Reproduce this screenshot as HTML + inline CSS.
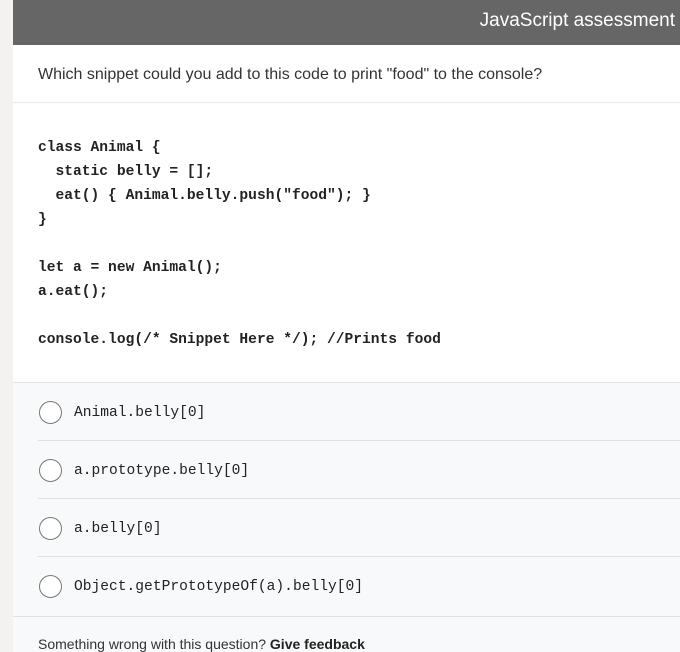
<!DOCTYPE html>
<html><head><style>
html,body{margin:0;width:680px;height:652px;overflow:hidden}
body{background:#f3f2f1;font-family:"Liberation Sans",sans-serif;position:relative}
.main{position:absolute;left:13px;top:0;width:667px;height:652px;background:#fff}
.hdr{height:45px;background:#666;color:#fff;font-size:19px;text-align:right;padding-right:5px;line-height:42px;box-sizing:border-box}
.q{height:57px;border-bottom:1px solid #eaeaea;font-size:16px;color:#333;padding-left:25px;line-height:60px;box-sizing:content-box}
.code{position:absolute;left:25px;top:136px;font-family:"Liberation Mono",monospace;font-weight:bold;font-size:14.6px;line-height:24px;color:#222;white-space:pre;margin:0}
.opts{position:absolute;top:382px;left:0;width:667px;height:233px;background:#f8f9fa;border-top:1px solid #e6e6e6}
.opt{position:absolute;left:25px;width:642px;height:57px;border-bottom:1px solid #e1e1e1}
.c{position:absolute;left:1px;top:18px;width:21px;height:21px;border:1.5px solid #777;border-radius:50%;background:#fff}
.t{position:absolute;left:36px;top:22px;font-family:"Liberation Mono",monospace;font-size:14.6px;color:#222}
.foot{position:absolute;top:616px;left:0;width:667px;height:36px;border-top:1px solid #e1e1e1;background:#f8f9fa;font-size:14px;color:#333;padding-left:25px;line-height:54px;box-sizing:border-box}
</style></head><body>
<div class="main">
<div class="hdr">JavaScript assessment</div>
<div class="q">Which snippet could you add to this code to print "food" to the console?</div>
<pre class="code">class Animal {
  static belly = [];
  eat() { Animal.belly.push("food"); }
}

let a = new Animal();
a.eat();

console.log(/* Snippet Here */); //Prints food</pre>
<div class="opts">
<div class="opt" style="top:0"><div class="c"></div><div class="t">Animal.belly[0]</div></div>
<div class="opt" style="top:58px"><div class="c"></div><div class="t">a.prototype.belly[0]</div></div>
<div class="opt" style="top:116px"><div class="c"></div><div class="t">a.belly[0]</div></div>
<div class="opt" style="top:174px;border-bottom:none"><div class="c"></div><div class="t">Object.getPrototypeOf(a).belly[0]</div></div>
</div>
<div class="foot">Something wrong with this question? <b style="color:#222;font-weight:600">Give feedback</b></div>
</div>
</body></html>
